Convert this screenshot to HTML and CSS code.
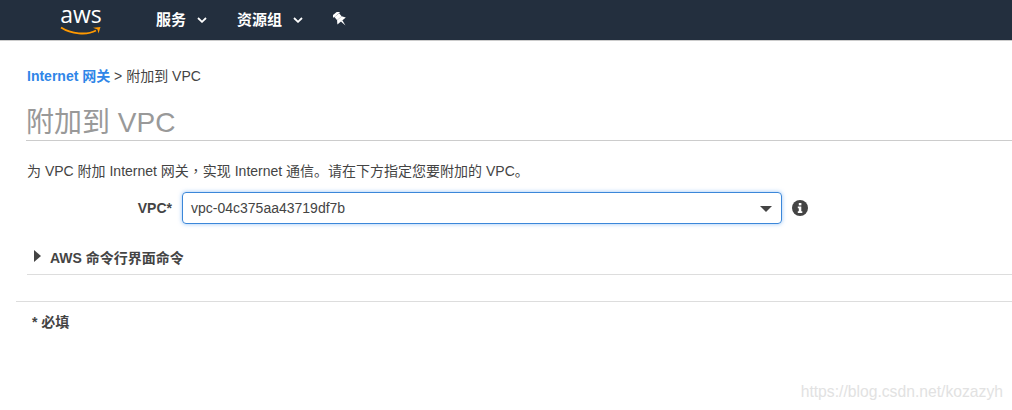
FILE: index.html
```html
<!DOCTYPE html>
<html lang="zh-CN">
<head>
    <title>附加到 VPC</title>
    <link rel="stylesheet" href="styles.css">
</head>
<body>
    <div class="navbar">
        <div class="logo">
            <span class="logo-text">aws</span>
            <svg class="smile" width="42" height="10" viewBox="0 0 42 10">
                <path d="M1 1.5C11 8 27 9.500 36 4.500" fill="none" stroke="#f90" stroke-width="1.800"/>
                <path d="M33 1.800L40.500 1 38.500 7.500 37.500 3.500Z" fill="#f90"/>
            </svg>
        </div>
        <div class="nav-item nav-services">服务
            <svg class="caret" width="10" height="6" viewBox="0 0 10 6"><path d="M1 1l4 3.800L9 1" fill="none" stroke="#fff" stroke-width="1.800"/></svg>
        </div>
        <div class="nav-item nav-groups">资源组
            <svg class="caret" width="10" height="6" viewBox="0 0 10 6"><path d="M1 1l4 3.800L9 1" fill="none" stroke="#fff" stroke-width="1.800"/></svg>
        </div>
        <svg class="pin" width="14" height="14" viewBox="0 0 14 14">
            <g transform="rotate(-40 7 7)" fill="#fff">
                <rect x="3" y="-0.500" width="8" height="2.500"/>
                <rect x="4" y="2" width="6" height="4"/>
                <path d="M4 6L1.500 9.500H12.500L10 6Z"/>
                <path d="M6 9.500H8L7 15.500Z"/>
            </g>
        </svg>
    </div>

    <div class="content">
        <div class="breadcrumb"><a href="#">Internet 网关</a> &gt; 附加到 VPC</div>
        <h1 class="title">附加到 VPC</h1>
        <p class="desc">为 VPC 附加 Internet 网关<span class="comma" lang="zh-TW">，</span>实现 Internet 通信。请在下方指定您要附加的 VPC。</p>

        <div class="form-row">
            <label class="form-label">VPC*</label>
            <div class="select-box">
                <span>vpc-04c375aa43719df7b</span>
                <span class="select-arrow"></span>
            </div>
            <svg class="info" width="16" height="16" viewBox="0 0 16 16">
                <circle cx="8" cy="8" r="8" fill="#444"/>
                <rect x="6.800" y="3" width="2.600" height="2.400" fill="#fff"/>
                <path d="M5.800 6.500H9.300V11.300H10.300V13H5.800V11.300H6.800V8.200H5.800Z" fill="#fff"/>
            </svg>
        </div>

        <div class="expander">
            <span class="expander-arrow"></span>
            <span class="expander-text">AWS 命令行界面命令</span>
        </div>
    </div>

    <div class="footer-note">
        <span>* 必填</span>
    </div>

    <div class="watermark">https://blog.csdn.net/kozazyh</div>
</body>
</html>
```

FILE: styles.css
```css
* {
    box-sizing: border-box;
}
html, body {
    height: 100%;
}
body {
    font-family: "Liberation Sans", "Noto Sans CJK SC", sans-serif;
    font-size: 14px;
    color: #444;
    margin: 0;
    background: #fff;
    overflow: hidden;
    display: flex;
    flex-direction: column;
}
.navbar {
    background: #232f3e;
    height: 41px;
    flex: none;
    border-bottom: 1px solid #ccc;
    display: flex;
    align-items: center;
    color: #fff;
}
.logo {
    margin-left: 60px;
    width: 42px;
    height: 40px;
    display: flex;
    flex-direction: column;
    align-items: center;
    color: #fff;
}
.logo-text {
    font-family: "Open Sans", sans-serif;
    font-size: 23px;
    line-height: 24px;
    margin-top: 2px;
    height: 24px;
}
.nav-item {
    font-size: 15px;
    font-weight: bold;
    display: flex;
    align-items: center;
    padding-bottom: 3px;
}
.nav-services {
    margin-left: 54px;
}
.nav-groups {
    margin-left: 30px;
}
.caret {
    margin-left: 11px;
    margin-top: 3px;
}
.pin {
    margin-left: 30px;
    margin-bottom: 2px;
}
.content {
    padding: 0 0 0 27px;
}
.breadcrumb {
    line-height: 16px;
    margin-top: 27px;
}
.breadcrumb a {
    color: #2f86e8;
    font-weight: bold;
    text-decoration: none;
}
.title {
    font-size: 28px;
    font-weight: normal;
    line-height: 34px;
    color: #999;
    margin: 21px 0 0 -1px;
    padding-top: 1px;
    border-bottom: 1px solid #ccc;
    height: 36px;
}
.desc {
    line-height: 16px;
    margin: 21px 0 0;
}
.comma {
    font-family: "Noto Sans CJK TC", sans-serif;
}
.form-row {
    display: flex;
    align-items: center;
    margin-top: 13px;
}
.form-label {
    width: 145px;
    text-align: right;
    font-weight: bold;
}
.select-box {
    width: 600px;
    height: 32px;
    margin-left: 10px;
    padding: 0 9px 0 8px;
    border: 1px solid #3b87d9;
    border-radius: 4px;
    box-shadow: 0 0 4px rgba(70, 150, 240, 0.55);
    display: flex;
    align-items: center;
    justify-content: space-between;
}
.select-arrow {
    width: 0;
    height: 0;
    border-left: 6px solid transparent;
    border-right: 6px solid transparent;
    border-top: 6px solid #444;
    margin-top: 2px;
}
.info {
    margin-left: 10px;
}
.expander {
    display: flex;
    align-items: center;
    height: 51px;
    padding: 16px 0 0 7px;
    border-bottom: 1px solid #ddd;
}
.expander-arrow {
    width: 0;
    height: 0;
    border-top: 6px solid transparent;
    border-bottom: 6px solid transparent;
    border-left: 7px solid #444;
    margin-top: -3px;
}
.expander-text {
    font-weight: bold;
    margin-left: 9px;
}
.footer-note {
    margin: 26px 0 0 16px;
    padding: 12px 0 0 16px;
    border-top: 1px solid #ddd;
    font-weight: bold;
    line-height: 16px;
}
.watermark {
    position: absolute;
    right: 9px;
    bottom: 9px;
    font-size: 15.700px;
    line-height: 18px;
    color: #e2e2e2;
}
```
